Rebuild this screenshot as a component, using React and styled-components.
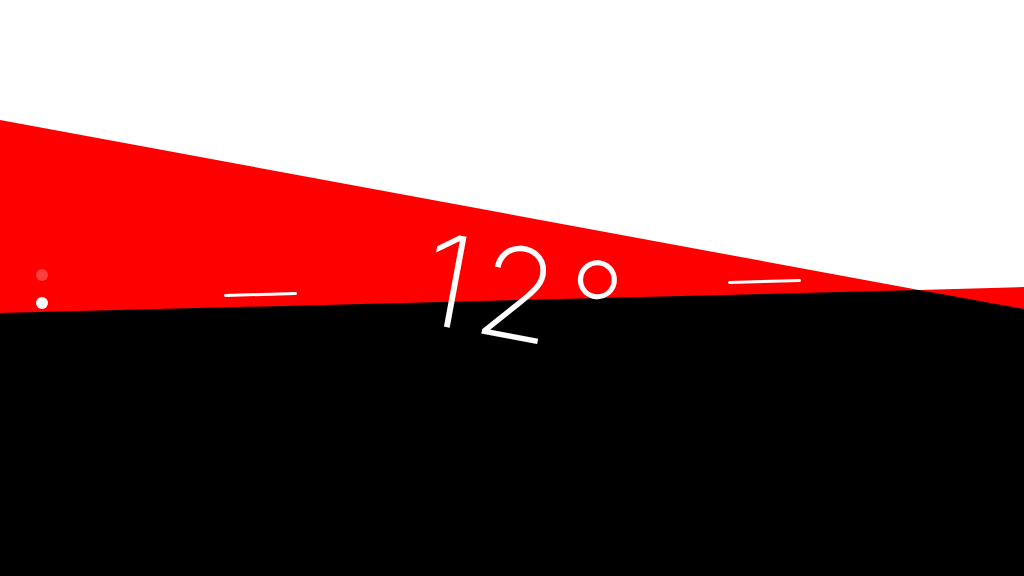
import React from 'react'
import styled, { createGlobalStyle } from 'styled-components'

const Global = createGlobalStyle`
  html, body { margin: 0; padding: 0; background: #000; }
  body { font-family: "Inter", "Lato", sans-serif; }
`

const Stage = styled.div`
  position: relative;
  width: 1024px;
  height: 576px;
  overflow: hidden;
  background: #ff0000;
`

const Planes = styled.svg`
  position: absolute;
  inset: 0;
`

const Overlay = styled.div`
  position: absolute;
  inset: 0;
  display: flex;
  align-items: center;
  padding-left: 36px;
`

const Dots = styled.div`
  display: flex;
  flex-direction: column;
  gap: 16px;
  transform: translateY(1px);
`

const Dot = styled.span`
  width: 12px;
  height: 12px;
  border-radius: 50%;
  background: ${p => (p.$dim ? 'rgba(255,255,255,0.25)' : '#fff')};
`

const Dash = styled.div`
  flex: none;
  margin-left: ${p => p.$gap}px;
  width: 73px;
  height: 3px;
  border-radius: 2px;
  background: #fff;
  transform: translateY(${p => p.$shift}px) rotate(-1.45deg);
`

const Readout = styled.div`
  flex: none;
  width: 240px;
  margin-left: 106px;
  text-align: center;
  color: #fff;
  font-family: "Inter", "Lato", sans-serif;
  font-weight: 160;
  font-size: 127px;
  line-height: 1;
  letter-spacing: 8px;
  white-space: nowrap;
  transform: translate(3px, 7px) rotate(10.5deg);
`

export default function App() {
  return (
    <>
      <Global />
      <Stage>
        <Planes width="1024" height="576" viewBox="0 0 1024 576">
          <polygon points="0,0 1024,0 1024,287 919,290 0,120" fill="#fff" />
          <polygon points="0,576 0,313 919,290 1024,309 1024,576" fill="#000" />
        </Planes>
        <Overlay>
          <Dots>
            <Dot $dim />
            <Dot />
          </Dots>
          <Dash $gap={176} $shift={6} />
          <Readout>12°</Readout>
          <Dash $gap={85} $shift={-7} />
        </Overlay>
      </Stage>
    </>
  )
}
